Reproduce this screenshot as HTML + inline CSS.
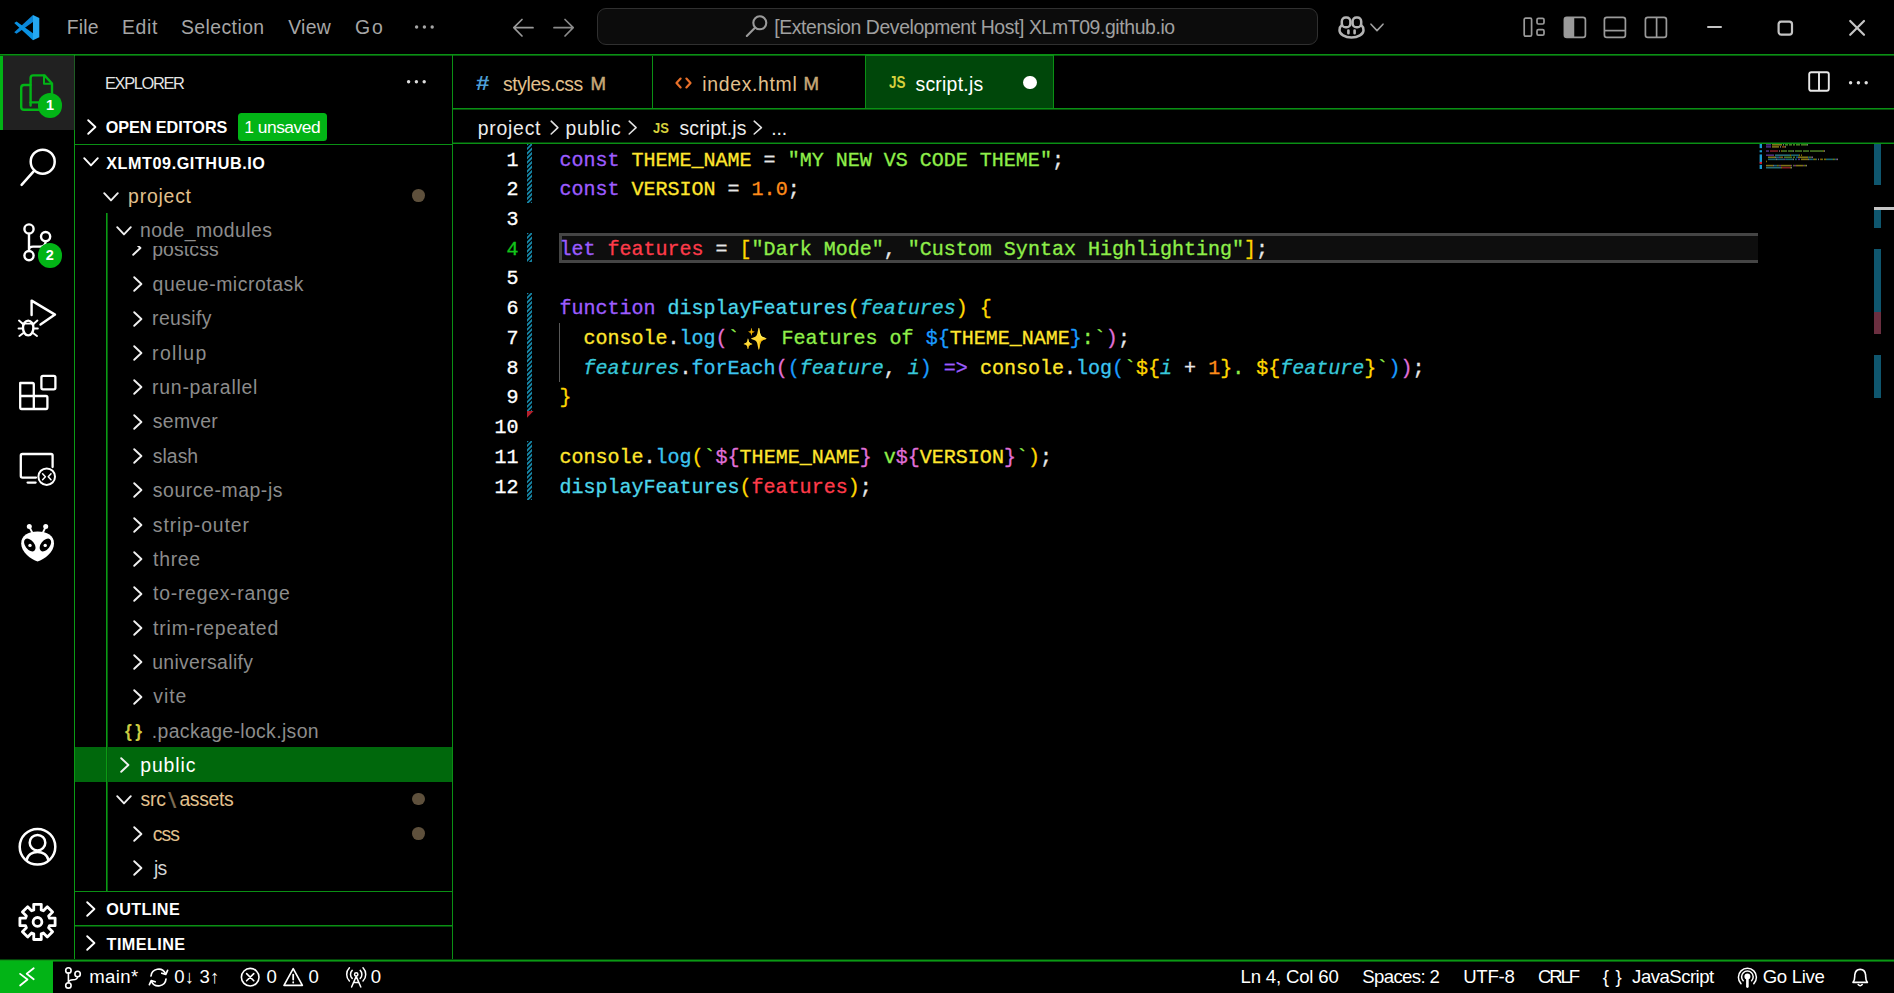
<!DOCTYPE html>
<html lang="en">
<head>
<meta charset="utf-8">
<title>script.js - XLmT09.github.io - Visual Studio Code</title>
<style>
*{box-sizing:border-box;margin:0;padding:0}
html,body{width:1894px;height:993px;background:#000;overflow:hidden}
body{position:relative;font-family:"Liberation Sans",sans-serif;color:#fff;font-size:19px}
.abs{position:absolute}
.hl{position:absolute;height:1px;background:#0a9014}
.vl{position:absolute;width:1px;background:#0a9014}
.t{position:absolute;white-space:pre;line-height:1}
svg{position:absolute;overflow:visible}
/* title bar */
.menu{color:#b4b4b4;font-size:19.5px;top:17px}
/* sidebar */
.row{position:absolute;left:75px;width:377px;height:34px}
.lbl{position:absolute;white-space:pre;line-height:1;font-size:19.6px}
.ign{color:#8c8c8c}
.mod{color:#e2c08d}
.hdr{position:absolute;white-space:pre;line-height:1;font-weight:bold;font-size:16.6px;color:#fff}
.dot{position:absolute;width:12px;height:12px;border-radius:50%;background:#5e503c;left:413px}
/* editor */
.ln{position:absolute;left:453px;width:65.5px;text-align:right;font-family:"Liberation Mono",monospace;font-size:20.03px;line-height:1;color:#fff;white-space:pre;-webkit-text-stroke:0.3px currentColor}
.cl{position:absolute;left:559.4px;font-family:"Liberation Mono",monospace;font-size:20.03px;line-height:1;white-space:pre;color:#e8e8e8;-webkit-text-stroke:0.3px currentColor}
.k{color:#9d5cff}.c{color:#ffe62e}.s{color:#8fee4a}.n{color:#ff8c1a}.v{color:#ff3b4a}
.f{color:#4dd6ea}.p{color:#38c8da;font-style:italic}.m{color:#3cc4f0}.w{color:#e8e8e8}
.b1{color:#ffd700}.b2{color:#e070d8}.b3{color:#1a9cff}
.sp{display:inline-block;width:29.9px;height:0;line-height:0;text-align:center;color:#ffb12e;font-family:"DejaVu Sans",sans-serif;font-size:21px;-webkit-text-stroke:0;vertical-align:baseline;position:relative;top:1.5px}
#minimap i{position:absolute;height:2px;opacity:.55}
#minimap b{position:absolute;width:2px;background:#1a9ad0}
.hatch{position:absolute;left:526.7px;width:5.6px;background:repeating-linear-gradient(153deg,#1a87a6 0 2.3px,#000 2.3px 4.1px)}
/* status */
.st{position:absolute;white-space:pre;line-height:1;font-size:19px;top:968px;color:#fff}
</style>
</head>
<body>

<!-- ===== TITLE BAR ===== -->
<div id="titlebar">
<svg style="left:13.8px;top:14.7px" width="25.3" height="25.3" viewBox="0 0 100 100"><polygon fill="#0a86d8" points="1,68 10,74 75,28 75,0"/><polygon fill="#0a92e2" points="1,32 10,26 75,72 75,100"/><polygon fill="#25a8f2" points="75,0 100,12 100,88 75,100"/></svg>
<div class="t" style="left:66.81px;top:17.78px;font-size:19.4px;letter-spacing:0.131px;color:#a6a6a6;">File</div>
<div class="t" style="left:122.01px;top:17.78px;font-size:19.4px;letter-spacing:0.635px;color:#a6a6a6;">Edit</div>
<div class="t" style="left:181.02px;top:17.78px;font-size:19.4px;letter-spacing:0.417px;color:#a6a6a6;">Selection</div>
<div class="t" style="left:288.21px;top:17.78px;font-size:19.4px;letter-spacing:0.296px;color:#a6a6a6;">View</div>
<div class="t" style="left:354.92px;top:17.78px;font-size:19.4px;letter-spacing:1.911px;color:#a6a6a6;">Go</div>
<svg style="left:414px;top:24px" width="21" height="6"><circle cx="2.6" cy="3" r="1.7" fill="#a6a6a6"/><circle cx="10.4" cy="3" r="1.7" fill="#a6a6a6"/><circle cx="18.2" cy="3" r="1.7" fill="#a6a6a6"/></svg>
<svg style="left:512px;top:17px" width="24" height="22" fill="none" stroke="#9a9a9a" stroke-width="1.7" stroke-linecap="round" stroke-linejoin="round"><path d="M21 10.7H2M10 2.5 L1.8 10.7 L10 19"/></svg>
<svg style="left:552px;top:17px" width="24" height="22" fill="none" stroke="#8a8a8a" stroke-width="1.7" stroke-linecap="round" stroke-linejoin="round"><path d="M2 10.7H21M13 2.5 L21.2 10.7 L13 19"/></svg>
<div class="abs" style="left:597px;top:8px;width:721px;height:37px;border:1px solid #303030;border-radius:9px;background:#0c0c0c"></div>
<svg style="left:745px;top:14px" width="24" height="24" fill="none" stroke="#9a9a9a" stroke-width="2.1" stroke-linecap="round"><circle cx="14.8" cy="8.8" r="6.5"/><path d="M10 13.7 L1.8 22"/></svg>
<div class="t" style="left:774.22px;top:17.58px;font-size:19.4px;letter-spacing:-0.393px;color:#a0a0a0;">[Extension Development Host] XLmT09.github.io</div>
<svg style="left:1338px;top:16px" width="27" height="23" viewBox="0 0 27 23" fill="none" stroke="#b4b4b4" stroke-width="2.5" stroke-linejoin="round" stroke-linecap="round">
<path d="M3.4 9.6 C1.8 10.8 1.5 12.2 1.5 14.2 C1.5 18.4 7 21.4 13.5 21.4 C20 21.4 25.5 18.4 25.5 14.2 C25.5 12.2 25.2 10.8 23.6 9.6"/>
<rect x="3.8" y="1.6" width="8.6" height="9.6" rx="3.8"/><rect x="14.6" y="1.6" width="8.6" height="9.6" rx="3.8"/>
<path d="M10.4 14.6 V17.2 M16.6 14.6 V17.2" stroke-width="2.6"/>
</svg>
<svg style="left:1369.5px;top:23px" width="14" height="10" fill="none" stroke="#a0a0a0" stroke-width="1.6" stroke-linecap="round" stroke-linejoin="round"><path d="M1 1.2 L7 7.6 L13 1.2"/></svg>
<svg style="left:1523px;top:17px" width="23" height="21" fill="none" stroke="#9a9a9a" stroke-width="1.7"><rect x="1.2" y="1.2" width="7.4" height="18" rx="1.4"/><rect x="14" y="1.4" width="7" height="5.6" rx="1.4"/><rect x="14" y="12.6" width="7" height="5.6" rx="1.4"/></svg>
<svg style="left:1562.5px;top:16px" width="24" height="23" fill="none" stroke="#9a9a9a" stroke-width="1.7"><rect x="1.4" y="1.4" width="21" height="20" rx="2.4"/><path d="M3.8 1.4 H10.4 V21.4 H3.8 Q1.4 21.4 1.4 19 V3.8 Q1.4 1.4 3.8 1.4Z" fill="#9a9a9a" stroke="none"/><path d="M10.4 1.4V21.4"/></svg>
<svg style="left:1603px;top:16px" width="24" height="23" fill="none" stroke="#9a9a9a" stroke-width="1.7"><rect x="1.4" y="1.4" width="21" height="20" rx="2.4"/><path d="M1.4 14.6H22.4"/></svg>
<svg style="left:1643.5px;top:16px" width="24" height="23" fill="none" stroke="#9a9a9a" stroke-width="1.7"><rect x="1.4" y="1.4" width="21" height="20" rx="2.4"/><path d="M12.6 1.4V21.4"/></svg>
<div class="abs" style="left:1706.6px;top:25.8px;width:15.6px;height:2.3px;background:#c4c4c4;border-radius:1px"></div>
<svg style="left:1777px;top:19.6px" width="17" height="17" fill="none" stroke="#c4c4c4" stroke-width="2.2"><rect x="1.6" y="1.7" width="13.4" height="12.9" rx="2.6"/></svg>
<svg style="left:1848px;top:19px" width="19" height="18" fill="none" stroke="#c4c4c4" stroke-width="2.2" stroke-linecap="round"><path d="M2.2 2 L16 15.8 M16 2 L2.2 15.8"/></svg>
</div>
<!-- ===== ACTIVITY BAR ===== -->
<div id="activity">
<div class="abs" style="left:0;top:55px;width:74px;height:75px;background:#212121"></div>
<div class="abs" style="left:0;top:55px;width:3px;height:75px;background:#02b416"></div>
<svg style="left:0;top:55px" width="75" height="75" fill="none" stroke="#02b416" stroke-width="2.4" stroke-linejoin="round" stroke-linecap="round">
<path d="M30.6 50.5 V23 Q30.6 20.4 33.2 20.4 H44.5 L52 28.5 V44"/>
<path d="M44 20.6 V28.8 H51.8" stroke-width="2"/>
<path d="M30.4 30 H24 Q21.2 30 21.2 32.8 V52 Q21.2 54.8 24 54.8 H40"/>
<path d="M30.6 47.4 H40"/>
</svg>
<div class="abs" style="left:37.6px;top:92.9px;width:24.8px;height:24.8px;border-radius:50%;background:#02b416"></div><div class="t" style="left:37.6px;top:98.0px;width:24.8px;text-align:center;font-size:14.5px;font-weight:bold;color:#fff">1</div>
<svg style="left:0;top:130px" width="75" height="75" fill="none" stroke="#fff" stroke-width="2.5" stroke-linecap="round"><circle cx="42.7" cy="31.7" r="12"/><path d="M34.3 40.6 L21.6 54.9"/></svg>
<svg style="left:0;top:205px" width="75" height="75" fill="none" stroke="#fff" stroke-width="2.4" stroke-linecap="round"><circle cx="29" cy="24" r="4.6"/><circle cx="29" cy="50.6" r="4.6"/><circle cx="45.6" cy="31.6" r="4.6"/><path d="M29 28.8 V45.8 M45.6 36.4 Q45.6 41.6 40 41.6 H33 Q29 41.6 29 45"/></svg>
<div class="abs" style="left:37.5px;top:242.9px;width:24.8px;height:24.8px;border-radius:50%;background:#02b416"></div><div class="t" style="left:37.5px;top:248.0px;width:24.8px;text-align:center;font-size:14.5px;font-weight:bold;color:#fff">2</div>
<svg style="left:0;top:280px" width="75" height="75" fill="none" stroke="#fff" stroke-width="2.4" stroke-linejoin="round" stroke-linecap="round">
<path d="M31.6 35 V20.6 L55 34.6 L40.5 44.6"/>
<ellipse cx="28.2" cy="48" rx="5.2" ry="7.4"/>
<path d="M22.4 43.6 H34 " stroke-width="1.8"/>
<path d="M23 44 L19 40.6 M33.4 44 L37.4 40.6 M22.8 48.6 H18.6 M33.6 48.6 H37.8 M23.4 53 L19.4 56 M33 53 L37 56" stroke-width="2"/>
</svg>
<svg style="left:0;top:355px" width="75" height="75" fill="none" stroke="#fff" stroke-width="2.3" stroke-linejoin="round">
<path d="M20.2 28 H32.4 Q33.8 28 33.8 29.4 V41 H46 Q47.4 41 47.4 42.4 V52.6 Q47.4 54 46 54 H21.6 Q20.2 54 20.2 52.6 Z"/>
<path d="M20.2 41 H33.8 V54"/>
<rect x="41.4" y="20.8" width="14" height="13.6" rx="1.6"/>
</svg>
<svg style="left:0;top:430px" width="75" height="75" fill="none" stroke="#fff" stroke-width="2.3" stroke-linejoin="round" stroke-linecap="round">
<path d="M36 47.6 H22.4 Q20.8 47.6 20.8 46 V25.6 Q20.8 24 22.4 24 H51 Q52.6 24 52.6 25.6 V37"/>
<path d="M27.6 52.6 H35.6"/>
<circle cx="46.7" cy="46.7" r="8.3" stroke-width="2"/>
<path d="M42.6 43.8 L45.4 46.8 L42.6 49.8 M51 43.8 L48.2 46.8 L51 49.8" stroke-width="1.5"/>
</svg>
<svg style="left:0;top:505px" width="75" height="75">
<path fill="#fff" d="M37.6 56.4 C31 54 21.2 47.6 21.2 38.4 C21.2 30.6 28 26.6 37.6 26.6 C47.2 26.6 54 30.6 54 38.4 C54 47.6 44.2 54 37.6 56.4 Z"/>
<path stroke="#fff" stroke-width="1.8" fill="none" d="M29.4 22 L33 29 M45.6 22 L42.2 29"/>
<circle cx="29.3" cy="21.6" r="2.5" fill="#fff"/><circle cx="45.7" cy="21.6" r="2.5" fill="#fff"/>
<ellipse cx="29.8" cy="40" rx="7.4" ry="4.5" transform="rotate(52 29.8 40)" fill="#000"/>
<ellipse cx="45.4" cy="40" rx="7.4" ry="4.5" transform="rotate(-52 45.4 40)" fill="#000"/>
<circle cx="30" cy="40.4" r="1.7" fill="#fff"/><circle cx="45.2" cy="40.4" r="1.7" fill="#fff"/>
</svg>
<svg style="left:0;top:809px" width="75" height="75" fill="none" stroke="#fff" stroke-width="2.5">
<circle cx="37.5" cy="37.7" r="17.8"/><circle cx="37.5" cy="33.7" r="7.8"/>
<path d="M26.4 51.6 C28.4 40 46.6 40 48.6 51.6"/>
</svg>
<svg style="left:0;top:884px" width="75" height="75" fill="none" stroke="#fff" stroke-width="2.8" stroke-linejoin="round"><path d="M33.8 25.9 L33.7 20.3 L41.3 20.3 L41.2 25.9 L43.4 26.8 L47.3 22.8 L52.6 28.1 L48.6 32.0 L49.5 34.2 L55.1 34.1 L55.1 41.7 L49.5 41.6 L48.6 43.8 L52.6 47.7 L47.3 53.0 L43.4 49.0 L41.2 49.9 L41.3 55.5 L33.7 55.5 L33.8 49.9 L31.6 49.0 L27.7 53.0 L22.4 47.7 L26.4 43.8 L25.5 41.6 L19.9 41.7 L19.9 34.1 L25.5 34.2 L26.4 32.0 L22.4 28.1 L27.7 22.8 L31.6 26.8 Z"/><circle cx="37.5" cy="37.9" r="4.4"/></svg>
</div>
<!-- ===== SIDEBAR ===== -->
<div id="sidebar">
<div class="t" style="left:104.95px;top:75.42px;font-size:16.4px;letter-spacing:-1.330px;color:#e4e4e4;">EXPLORER</div>
<svg style="left:405.5px;top:79px" width="21" height="6"><circle cx="2.6" cy="2.8" r="1.7" fill="#ddd"/><circle cx="10.4" cy="2.8" r="1.7" fill="#ddd"/><circle cx="18.2" cy="2.8" r="1.7" fill="#ddd"/></svg>
<svg style="left:86.5px;top:119.3px" width="10" height="16" fill="none" stroke="#fff" stroke-width="1.9" stroke-linecap="round" stroke-linejoin="round"><path d="M1.2 1.2 L8.4 8 L1.2 14.8"/></svg>
<div class="t" style="left:105.64px;top:119.29px;font-size:16.2px;letter-spacing:-0.029px;color:#fff;font-weight:bold;">OPEN EDITORS</div>
<div class="abs" style="left:237.7px;top:112.8px;width:89.2px;height:28.4px;border-radius:3.5px;background:#02b416"></div>
<div class="t" style="left:244.27px;top:119.27px;font-size:17.4px;letter-spacing:-0.494px;color:#fff;">1 unsaved</div>
<div class="hl" style="left:75px;top:144px;width:377px"></div>
<svg style="left:83.2px;top:157.4px" width="16" height="10" fill="none" stroke="#fff" stroke-width="1.9" stroke-linecap="round" stroke-linejoin="round"><path d="M1.2 1.2 L8 8.4 L14.8 1.2"/></svg>
<div class="t" style="left:106.16px;top:154.69px;font-size:16.2px;letter-spacing:0.568px;color:#fff;font-weight:bold;">XLMT09.GITHUB.IO</div>
<div class="abs" style="left:75px;top:747.2px;width:377px;height:34.4px;background:#00680c"></div>
<div class="abs" style="left:106px;top:213px;height:678px;width:1px;background:#0a9a14"></div>
<div class="abs" style="left:107px;top:213px;height:678px;width:1px;background:#065c0c"></div>
<div class="abs" style="left:75px;top:246.4px;width:377px;height:20px;overflow:hidden">
<svg style="left:57.3px;top:-6.0px" width="10" height="16" fill="none" stroke="#f0f0f0" stroke-width="1.9" stroke-linecap="round" stroke-linejoin="round"><path d="M1.2 1.2 L8.4 8 L1.2 14.8"/></svg>
<div class="t" style="left:77.15px;top:-6.62px;font-size:19.4px;letter-spacing:0.130px;color:#8c8c8c;">postcss</div>
</div>
<svg style="left:103.3px;top:191.8px" width="16" height="10" fill="none" stroke="#f0f0f0" stroke-width="1.9" stroke-linecap="round" stroke-linejoin="round"><path d="M1.2 1.2 L8 8.4 L14.8 1.2"/></svg>
<div class="t" style="left:128.05px;top:187.08px;font-size:19.4px;letter-spacing:0.794px;color:#e2c08d;">project</div>
<svg style="left:115.8px;top:226.0px" width="16" height="10" fill="none" stroke="#f0f0f0" stroke-width="1.9" stroke-linecap="round" stroke-linejoin="round"><path d="M1.2 1.2 L8 8.4 L14.8 1.2"/></svg>
<div class="t" style="left:140.01px;top:221.28px;font-size:19.4px;letter-spacing:0.420px;color:#8c8c8c;">node_modules</div>
<svg style="left:132.5px;top:276.3px" width="10" height="16" fill="none" stroke="#f0f0f0" stroke-width="1.9" stroke-linecap="round" stroke-linejoin="round"><path d="M1.2 1.2 L8.4 8 L1.2 14.8"/></svg>
<div class="t" style="left:152.59px;top:275.08px;font-size:19.4px;letter-spacing:0.534px;color:#8c8c8c;">queue-microtask</div>
<svg style="left:132.5px;top:310.7px" width="10" height="16" fill="none" stroke="#f0f0f0" stroke-width="1.9" stroke-linecap="round" stroke-linejoin="round"><path d="M1.2 1.2 L8.4 8 L1.2 14.8"/></svg>
<div class="t" style="left:152.11px;top:309.48px;font-size:19.4px;letter-spacing:0.365px;color:#8c8c8c;">reusify</div>
<svg style="left:132.5px;top:345.0px" width="10" height="16" fill="none" stroke="#f0f0f0" stroke-width="1.9" stroke-linecap="round" stroke-linejoin="round"><path d="M1.2 1.2 L8.4 8 L1.2 14.8"/></svg>
<div class="t" style="left:152.11px;top:343.78px;font-size:19.4px;letter-spacing:1.331px;color:#8c8c8c;">rollup</div>
<svg style="left:132.5px;top:379.3px" width="10" height="16" fill="none" stroke="#f0f0f0" stroke-width="1.9" stroke-linecap="round" stroke-linejoin="round"><path d="M1.2 1.2 L8.4 8 L1.2 14.8"/></svg>
<div class="t" style="left:152.11px;top:378.08px;font-size:19.4px;letter-spacing:0.749px;color:#8c8c8c;">run-parallel</div>
<svg style="left:132.5px;top:413.7px" width="10" height="16" fill="none" stroke="#f0f0f0" stroke-width="1.9" stroke-linecap="round" stroke-linejoin="round"><path d="M1.2 1.2 L8.4 8 L1.2 14.8"/></svg>
<div class="t" style="left:152.86px;top:412.48px;font-size:19.4px;letter-spacing:0.273px;color:#8c8c8c;">semver</div>
<svg style="left:132.5px;top:448.1px" width="10" height="16" fill="none" stroke="#f0f0f0" stroke-width="1.9" stroke-linecap="round" stroke-linejoin="round"><path d="M1.2 1.2 L8.4 8 L1.2 14.8"/></svg>
<div class="t" style="left:152.86px;top:446.88px;font-size:19.4px;color:#8c8c8c;">slash</div>
<svg style="left:132.5px;top:482.4px" width="10" height="16" fill="none" stroke="#f0f0f0" stroke-width="1.9" stroke-linecap="round" stroke-linejoin="round"><path d="M1.2 1.2 L8.4 8 L1.2 14.8"/></svg>
<div class="t" style="left:152.86px;top:481.18px;font-size:19.4px;letter-spacing:0.562px;color:#8c8c8c;">source-map-js</div>
<svg style="left:132.5px;top:516.8px" width="10" height="16" fill="none" stroke="#f0f0f0" stroke-width="1.9" stroke-linecap="round" stroke-linejoin="round"><path d="M1.2 1.2 L8.4 8 L1.2 14.8"/></svg>
<div class="t" style="left:152.86px;top:515.58px;font-size:19.4px;letter-spacing:0.873px;color:#8c8c8c;">strip-outer</div>
<svg style="left:132.5px;top:551.1px" width="10" height="16" fill="none" stroke="#f0f0f0" stroke-width="1.9" stroke-linecap="round" stroke-linejoin="round"><path d="M1.2 1.2 L8.4 8 L1.2 14.8"/></svg>
<div class="t" style="left:153.11px;top:549.88px;font-size:19.4px;letter-spacing:0.709px;color:#8c8c8c;">three</div>
<svg style="left:132.5px;top:585.5px" width="10" height="16" fill="none" stroke="#f0f0f0" stroke-width="1.9" stroke-linecap="round" stroke-linejoin="round"><path d="M1.2 1.2 L8.4 8 L1.2 14.8"/></svg>
<div class="t" style="left:153.11px;top:584.28px;font-size:19.4px;letter-spacing:0.731px;color:#8c8c8c;">to-regex-range</div>
<svg style="left:132.5px;top:619.8px" width="10" height="16" fill="none" stroke="#f0f0f0" stroke-width="1.9" stroke-linecap="round" stroke-linejoin="round"><path d="M1.2 1.2 L8.4 8 L1.2 14.8"/></svg>
<div class="t" style="left:153.11px;top:618.58px;font-size:19.4px;letter-spacing:0.815px;color:#8c8c8c;">trim-repeated</div>
<svg style="left:132.5px;top:654.2px" width="10" height="16" fill="none" stroke="#f0f0f0" stroke-width="1.9" stroke-linecap="round" stroke-linejoin="round"><path d="M1.2 1.2 L8.4 8 L1.2 14.8"/></svg>
<div class="t" style="left:152.14px;top:652.98px;font-size:19.4px;letter-spacing:0.351px;color:#8c8c8c;">universalify</div>
<svg style="left:132.5px;top:688.5px" width="10" height="16" fill="none" stroke="#f0f0f0" stroke-width="1.9" stroke-linecap="round" stroke-linejoin="round"><path d="M1.2 1.2 L8.4 8 L1.2 14.8"/></svg>
<div class="t" style="left:153.33px;top:687.28px;font-size:19.4px;letter-spacing:0.913px;color:#8c8c8c;">vite</div>
<div class="t" style="left:125.12px;top:722.69px;font-size:17.5px;letter-spacing:3.426px;color:#cbcb41;font-weight:bold;">{}</div>
<div class="t" style="left:151.83px;top:721.68px;font-size:19.4px;letter-spacing:0.362px;color:#8c8c8c;">.package-lock.json</div>
<svg style="left:120.2px;top:757.3px" width="10" height="16" fill="none" stroke="#f0f0f0" stroke-width="1.9" stroke-linecap="round" stroke-linejoin="round"><path d="M1.2 1.2 L8.4 8 L1.2 14.8"/></svg>
<div class="t" style="left:140.25px;top:756.08px;font-size:19.4px;letter-spacing:0.895px;color:#fff;">public</div>
<svg style="left:115.6px;top:795.1px" width="16" height="10" fill="none" stroke="#f0f0f0" stroke-width="1.9" stroke-linecap="round" stroke-linejoin="round"><path d="M1.2 1.2 L8 8.4 L14.8 1.2"/></svg>
<div class="t" style="left:140.56px;top:790.38px;font-size:19.4px;letter-spacing:-0.204px;color:#e2c08d;">src</div>
<div class="t" style="left:168.40px;top:791.98px;font-size:19.4px;color:#7d6c52;transform:scale(1.55,1.12);transform-origin:0 85%;">\</div>
<div class="t" style="left:179.38px;top:790.38px;font-size:19.4px;letter-spacing:-0.349px;color:#e2c08d;">assets</div>
<svg style="left:132.5px;top:825.9px" width="10" height="16" fill="none" stroke="#f0f0f0" stroke-width="1.9" stroke-linecap="round" stroke-linejoin="round"><path d="M1.2 1.2 L8.4 8 L1.2 14.8"/></svg>
<div class="t" style="left:152.78px;top:824.68px;font-size:19.4px;letter-spacing:-0.987px;color:#e2c08d;">css</div>
<svg style="left:132.5px;top:860.3px" width="10" height="16" fill="none" stroke="#f0f0f0" stroke-width="1.9" stroke-linecap="round" stroke-linejoin="round"><path d="M1.2 1.2 L8.4 8 L1.2 14.8"/></svg>
<div class="t" style="left:154.07px;top:859.08px;font-size:19.4px;letter-spacing:-0.983px;color:#d4d4d4;">js</div>
<div class="dot" style="left:412.0px;top:189.2px;width:12.8px;height:12.8px"></div>
<div class="dot" style="left:412.0px;top:792.6px;width:12.8px;height:12.8px"></div>
<div class="dot" style="left:412.0px;top:827.0px;width:12.8px;height:12.8px"></div>
<div class="hl" style="left:75px;top:891px;width:377px"></div>
<div class="hl" style="left:75px;top:925px;width:377px"></div>
<div class="hl" style="left:75px;top:926px;width:377px;background:#054a0a"></div>
<svg style="left:86.3px;top:900.8px" width="10" height="16" fill="none" stroke="#fff" stroke-width="1.9" stroke-linecap="round" stroke-linejoin="round"><path d="M1.2 1.2 L8.4 8 L1.2 14.8"/></svg>
<div class="t" style="left:106.14px;top:901.29px;font-size:16.2px;letter-spacing:0.433px;color:#fff;font-weight:bold;">OUTLINE</div>
<svg style="left:86.3px;top:935.2px" width="10" height="16" fill="none" stroke="#fff" stroke-width="1.9" stroke-linecap="round" stroke-linejoin="round"><path d="M1.2 1.2 L8.4 8 L1.2 14.8"/></svg>
<div class="t" style="left:106.62px;top:935.69px;font-size:16.2px;letter-spacing:0.431px;color:#fff;font-weight:bold;">TIMELINE</div>
</div>
<!-- ===== TABS + BREADCRUMBS ===== -->
<div id="tabs">
<div class="abs" style="left:866px;top:55px;width:187px;height:53px;background:#00470a"></div>
<div class="vl" style="left:652px;top:55px;height:53px"></div>
<div class="vl" style="left:865px;top:55px;height:53px"></div>
<div class="vl" style="left:1053px;top:55px;height:53px"></div>
<div class="t" style="left:475.95px;top:72.85px;font-size:20.5px;color:#4d9fd6;font-weight:bold;transform:scaleX(1.18);transform-origin:0 0;">#</div>
<div class="t" style="left:502.96px;top:74.78px;font-size:19.4px;letter-spacing:-0.415px;color:#e2c08d;">styles.css</div>
<div class="t" style="left:590.47px;top:75.46px;font-size:18.6px;color:#c8a876;-webkit-text-stroke:0.5px #c8a876;">M</div>
<svg style="left:675px;top:76.5px" width="17" height="12" fill="none" stroke="#e8702a" stroke-width="2.2" stroke-linecap="round" stroke-linejoin="round"><path d="M5.6 1.6 L1.5 6 L5.6 10.4 M11.4 1.6 L15.5 6 L11.4 10.4"/></svg>
<div class="t" style="left:702.30px;top:74.78px;font-size:19.4px;letter-spacing:0.675px;color:#e2c08d;">index.html</div>
<div class="t" style="left:803.47px;top:75.46px;font-size:18.6px;color:#c8a876;-webkit-text-stroke:0.5px #c8a876;">M</div>
<div class="t" style="left:889.00px;top:75.19px;font-size:15.6px;transform:scaleX(0.866);transform-origin:0 0;color:#d6d03c;font-weight:bold;">JS</div>
<div class="t" style="left:915.46px;top:74.78px;font-size:19.4px;letter-spacing:0.249px;color:#fff;">script.js</div>
<div class="abs" style="left:1023.4px;top:75.9px;width:13.2px;height:13.2px;border-radius:50%;background:#fff"></div>
<svg style="left:1808px;top:71px" width="22" height="21" fill="none" stroke="#e8e8e8" stroke-width="1.9" stroke-linejoin="round"><rect x="1.2" y="1.2" width="19.6" height="18.6" rx="2"/><path d="M11 1.2 V19.8"/></svg>
<svg style="left:1848px;top:79.6px" width="21" height="6"><circle cx="2.6" cy="2.8" r="1.7" fill="#e0e0e0"/><circle cx="10.4" cy="2.8" r="1.7" fill="#e0e0e0"/><circle cx="18.2" cy="2.8" r="1.7" fill="#e0e0e0"/></svg>
<div class="t" style="left:477.65px;top:118.78px;font-size:19.4px;letter-spacing:0.777px;color:#ececec;">project</div>
<svg style="left:549.8px;top:120.4px" width="9.5" height="16" fill="none" stroke="#e0e0e0" stroke-width="1.6" stroke-linecap="round" stroke-linejoin="round"><path d="M1.2 1.2 L7.9 7.6 L1.2 14"/></svg>
<div class="t" style="left:565.45px;top:118.78px;font-size:19.4px;letter-spacing:0.895px;color:#ececec;">public</div>
<svg style="left:628.3px;top:120.4px" width="9.7" height="16" fill="none" stroke="#e0e0e0" stroke-width="1.6" stroke-linecap="round" stroke-linejoin="round"><path d="M1.2 1.2 L8.1 7.6 L1.2 14"/></svg>
<div class="t" style="left:652.70px;top:119.76px;font-size:15.4px;transform:scaleX(0.844);transform-origin:0 0;color:#d6d03c;font-weight:bold;">JS</div>
<div class="t" style="left:679.46px;top:118.78px;font-size:19.4px;letter-spacing:0.161px;color:#ececec;">script.js</div>
<svg style="left:753.3px;top:120.4px" width="10.0" height="16" fill="none" stroke="#e0e0e0" stroke-width="1.6" stroke-linecap="round" stroke-linejoin="round"><path d="M1.2 1.2 L8.4 7.6 L1.2 14"/></svg>
<div class="t" style="left:771.13px;top:118.78px;font-size:19.4px;letter-spacing:-0.064px;color:#ececec;">...</div>
</div>
<!-- ===== EDITOR ===== -->
<div id="editor">
<div class="abs" style="left:559px;top:233.4px;width:1198.5px;height:29.4px;background:#0e0e0e;border:3px solid #454545;border-right:0"></div>
<svg style="left:526.8px;top:143.9px;overflow:hidden" width="5.5" height="59.1"><path d="M-1 1.50 L6.5 -6.00 M-1 6.03 L6.5 -1.47 M-1 10.56 L6.5 3.06 M-1 15.09 L6.5 7.59 M-1 19.62 L6.5 12.12 M-1 24.15 L6.5 16.65 M-1 28.68 L6.5 21.18 M-1 33.21 L6.5 25.71 M-1 37.74 L6.5 30.24 M-1 42.27 L6.5 34.77 M-1 46.80 L6.5 39.30 M-1 51.33 L6.5 43.83 M-1 55.86 L6.5 48.36 M-1 60.39 L6.5 52.89 M-1 64.92 L6.5 57.42 " stroke="#1787a8" stroke-width="1.9" fill="none"/></svg>
<svg style="left:526.8px;top:233.1px;overflow:hidden" width="5.5" height="29.4"><path d="M-1 1.50 L6.5 -6.00 M-1 6.03 L6.5 -1.47 M-1 10.56 L6.5 3.06 M-1 15.09 L6.5 7.59 M-1 19.62 L6.5 12.12 M-1 24.15 L6.5 16.65 M-1 28.68 L6.5 21.18 M-1 33.21 L6.5 25.71 M-1 37.74 L6.5 30.24 " stroke="#1787a8" stroke-width="1.9" fill="none"/></svg>
<svg style="left:526.8px;top:292.5px;overflow:hidden" width="5.5" height="118.6"><path d="M-1 1.50 L6.5 -6.00 M-1 6.03 L6.5 -1.47 M-1 10.56 L6.5 3.06 M-1 15.09 L6.5 7.59 M-1 19.62 L6.5 12.12 M-1 24.15 L6.5 16.65 M-1 28.68 L6.5 21.18 M-1 33.21 L6.5 25.71 M-1 37.74 L6.5 30.24 M-1 42.27 L6.5 34.77 M-1 46.80 L6.5 39.30 M-1 51.33 L6.5 43.83 M-1 55.86 L6.5 48.36 M-1 60.39 L6.5 52.89 M-1 64.92 L6.5 57.42 M-1 69.45 L6.5 61.95 M-1 73.98 L6.5 66.48 M-1 78.51 L6.5 71.01 M-1 83.04 L6.5 75.54 M-1 87.57 L6.5 80.07 M-1 92.10 L6.5 84.60 M-1 96.63 L6.5 89.13 M-1 101.16 L6.5 93.66 M-1 105.69 L6.5 98.19 M-1 110.22 L6.5 102.72 M-1 114.75 L6.5 107.25 M-1 119.28 L6.5 111.78 M-1 123.81 L6.5 116.31 " stroke="#1787a8" stroke-width="1.9" fill="none"/></svg>
<svg style="left:526.8px;top:441.1px;overflow:hidden" width="5.5" height="59.1"><path d="M-1 1.50 L6.5 -6.00 M-1 6.03 L6.5 -1.47 M-1 10.56 L6.5 3.06 M-1 15.09 L6.5 7.59 M-1 19.62 L6.5 12.12 M-1 24.15 L6.5 16.65 M-1 28.68 L6.5 21.18 M-1 33.21 L6.5 25.71 M-1 37.74 L6.5 30.24 M-1 42.27 L6.5 34.77 M-1 46.80 L6.5 39.30 M-1 51.33 L6.5 43.83 M-1 55.86 L6.5 48.36 M-1 60.39 L6.5 52.89 M-1 64.92 L6.5 57.42 " stroke="#1787a8" stroke-width="1.9" fill="none"/></svg>
<svg style="left:526.5px;top:411.2px" width="7" height="7"><polygon points="0,0 6.6,0 0,6.8" fill="#b3202c"/></svg>
<div class="abs" style="left:559px;top:322.5px;width:1px;height:59.4px;background:#585858"></div>
<div class="ln" style="top:151.00px">1</div>
<div class="cl" style="top:151.00px"><span class="k">const</span> <span class="c">THEME_NAME</span> = <span class="s">&quot;MY NEW VS CODE THEME&quot;</span>;</div>
<div class="ln" style="top:180.00px">2</div>
<div class="cl" style="top:180.00px"><span class="k">const</span> <span class="c">VERSION</span> = <span class="n">1.0</span>;</div>
<div class="ln" style="top:210.00px">3</div>
<div class="ln" style="top:240.00px;color:#12c41a">4</div>
<div class="cl" style="top:240.00px"><span class="k">let</span> <span class="v">features</span> = <span class="b1">[</span><span class="s">&quot;Dark Mode&quot;</span>, <span class="s">&quot;Custom Syntax Highlighting&quot;</span><span class="b1">]</span>;</div>
<div class="ln" style="top:269.00px">5</div>
<div class="ln" style="top:299.00px">6</div>
<div class="cl" style="top:299.00px"><span class="k">function</span> <span class="f">displayFeatures</span><span class="b1">(</span><span class="p">features</span><span class="b1">)</span> <span class="b1">{</span></div>
<div class="ln" style="top:329.00px">7</div>
<div class="cl" style="top:329.00px">  <span class="c">console</span>.<span class="m">log</span><span class="b2">(</span><span class="s">`</span><span class="sp">✨</span><span class="s"> Features of </span><span class="b3">${</span><span class="c">THEME_NAME</span><span class="b3">}</span><span class="s">:`</span><span class="b2">)</span>;</div>
<div class="ln" style="top:359.00px">8</div>
<div class="cl" style="top:359.00px">  <span class="p">features</span>.<span class="m">forEach</span><span class="b2">(</span><span class="b3">(</span><span class="p">feature</span>, <span class="p">i</span><span class="b3">)</span> <span class="k">=&gt;</span> <span class="c">console</span>.<span class="m">log</span><span class="b3">(</span><span class="s">`</span><span class="b1">${</span><span class="p">i</span> + <span class="n">1</span><span class="b1">}</span><span class="s">. </span><span class="b1">${</span><span class="p">feature</span><span class="b1">}</span><span class="s">`</span><span class="b3">)</span><span class="b2">)</span>;</div>
<div class="ln" style="top:388.00px">9</div>
<div class="cl" style="top:388.00px"><span class="b1">}</span></div>
<div class="ln" style="top:418.00px">10</div>
<div class="ln" style="top:448.00px">11</div>
<div class="cl" style="top:448.00px"><span class="c">console</span>.<span class="m">log</span><span class="b1">(</span><span class="s">`</span><span class="b2">${</span><span class="c">THEME_NAME</span><span class="b2">}</span><span class="s"> v</span><span class="b2">${</span><span class="c">VERSION</span><span class="b2">}</span><span class="s">`</span><span class="b1">)</span>;</div>
<div class="ln" style="top:478.00px">12</div>
<div class="cl" style="top:478.00px"><span class="f">displayFeatures</span><span class="b1">(</span><span class="v">features</span><span class="b1">)</span>;</div>
<svg id="minimap" style="left:1750px;top:140px" width="120" height="40"><g opacity=".5"><rect x="16" y="4.00" width="5" height="1.6" fill="#9d5cff"/><rect x="22" y="4.00" width="10" height="1.6" fill="#ffe62e"/><rect x="33" y="4.00" width="1" height="1.6" fill="#e8e8e8"/><rect x="35" y="4.00" width="3" height="1.6" fill="#8fee4a"/><rect x="39" y="4.00" width="3" height="1.6" fill="#8fee4a"/><rect x="43" y="4.00" width="2" height="1.6" fill="#8fee4a"/><rect x="46" y="4.00" width="4" height="1.6" fill="#8fee4a"/><rect x="51" y="4.00" width="6" height="1.6" fill="#8fee4a"/><rect x="57" y="4.00" width="1" height="1.6" fill="#e8e8e8"/><rect x="16" y="6.08" width="5" height="1.6" fill="#9d5cff"/><rect x="22" y="6.08" width="7" height="1.6" fill="#ffe62e"/><rect x="30" y="6.08" width="1" height="1.6" fill="#e8e8e8"/><rect x="32" y="6.08" width="3" height="1.6" fill="#ff8c1a"/><rect x="35" y="6.08" width="1" height="1.6" fill="#e8e8e8"/><rect x="16" y="10.24" width="3" height="1.6" fill="#9d5cff"/><rect x="20" y="10.24" width="8" height="1.6" fill="#ff3b4a"/><rect x="29" y="10.24" width="1" height="1.6" fill="#e8e8e8"/><rect x="31" y="10.24" width="1" height="1.6" fill="#ffd700"/><rect x="32" y="10.24" width="5" height="1.6" fill="#8fee4a"/><rect x="38" y="10.24" width="5" height="1.6" fill="#8fee4a"/><rect x="43" y="10.24" width="1" height="1.6" fill="#e8e8e8"/><rect x="45" y="10.24" width="7" height="1.6" fill="#8fee4a"/><rect x="53" y="10.24" width="6" height="1.6" fill="#8fee4a"/><rect x="60" y="10.24" width="13" height="1.6" fill="#8fee4a"/><rect x="73" y="10.24" width="1" height="1.6" fill="#ffd700"/><rect x="74" y="10.24" width="1" height="1.6" fill="#e8e8e8"/><rect x="16" y="14.40" width="8" height="1.6" fill="#9d5cff"/><rect x="25" y="14.40" width="15" height="1.6" fill="#4dd6ea"/><rect x="40" y="14.40" width="1" height="1.6" fill="#ffd700"/><rect x="41" y="14.40" width="8" height="1.6" fill="#38c8da"/><rect x="49" y="14.40" width="1" height="1.6" fill="#ffd700"/><rect x="51" y="14.40" width="1" height="1.6" fill="#ffd700"/><rect x="18" y="16.48" width="7" height="1.6" fill="#ffe62e"/><rect x="25" y="16.48" width="1" height="1.6" fill="#e8e8e8"/><rect x="26" y="16.48" width="3" height="1.6" fill="#3cc4f0"/><rect x="29" y="16.48" width="1" height="1.6" fill="#e070d8"/><rect x="30" y="16.48" width="1" height="1.6" fill="#8fee4a"/><rect x="31" y="16.48" width="2" height="1.6" fill="#ffb12e"/><rect x="34" y="16.48" width="8" height="1.6" fill="#8fee4a"/><rect x="43" y="16.48" width="2" height="1.6" fill="#8fee4a"/><rect x="46" y="16.48" width="2" height="1.6" fill="#1a9cff"/><rect x="48" y="16.48" width="10" height="1.6" fill="#ffe62e"/><rect x="58" y="16.48" width="1" height="1.6" fill="#1a9cff"/><rect x="59" y="16.48" width="2" height="1.6" fill="#8fee4a"/><rect x="61" y="16.48" width="1" height="1.6" fill="#e070d8"/><rect x="62" y="16.48" width="1" height="1.6" fill="#e8e8e8"/><rect x="18" y="18.56" width="8" height="1.6" fill="#38c8da"/><rect x="26" y="18.56" width="1" height="1.6" fill="#e8e8e8"/><rect x="27" y="18.56" width="7" height="1.6" fill="#3cc4f0"/><rect x="34" y="18.56" width="1" height="1.6" fill="#e070d8"/><rect x="35" y="18.56" width="1" height="1.6" fill="#1a9cff"/><rect x="36" y="18.56" width="7" height="1.6" fill="#38c8da"/><rect x="43" y="18.56" width="1" height="1.6" fill="#e8e8e8"/><rect x="45" y="18.56" width="1" height="1.6" fill="#38c8da"/><rect x="46" y="18.56" width="1" height="1.6" fill="#1a9cff"/><rect x="48" y="18.56" width="2" height="1.6" fill="#9d5cff"/><rect x="51" y="18.56" width="7" height="1.6" fill="#ffe62e"/><rect x="58" y="18.56" width="1" height="1.6" fill="#e8e8e8"/><rect x="59" y="18.56" width="3" height="1.6" fill="#3cc4f0"/><rect x="62" y="18.56" width="1" height="1.6" fill="#1a9cff"/><rect x="63" y="18.56" width="1" height="1.6" fill="#8fee4a"/><rect x="64" y="18.56" width="2" height="1.6" fill="#ffd700"/><rect x="66" y="18.56" width="1" height="1.6" fill="#38c8da"/><rect x="68" y="18.56" width="1" height="1.6" fill="#e8e8e8"/><rect x="70" y="18.56" width="1" height="1.6" fill="#ff8c1a"/><rect x="71" y="18.56" width="1" height="1.6" fill="#ffd700"/><rect x="72" y="18.56" width="1" height="1.6" fill="#8fee4a"/><rect x="74" y="18.56" width="2" height="1.6" fill="#ffd700"/><rect x="76" y="18.56" width="7" height="1.6" fill="#38c8da"/><rect x="83" y="18.56" width="1" height="1.6" fill="#ffd700"/><rect x="84" y="18.56" width="1" height="1.6" fill="#8fee4a"/><rect x="85" y="18.56" width="1" height="1.6" fill="#1a9cff"/><rect x="86" y="18.56" width="1" height="1.6" fill="#e070d8"/><rect x="87" y="18.56" width="1" height="1.6" fill="#e8e8e8"/><rect x="16" y="20.64" width="1" height="1.6" fill="#ffd700"/><rect x="16" y="24.80" width="7" height="1.6" fill="#ffe62e"/><rect x="23" y="24.80" width="1" height="1.6" fill="#e8e8e8"/><rect x="24" y="24.80" width="3" height="1.6" fill="#3cc4f0"/><rect x="27" y="24.80" width="1" height="1.6" fill="#ffd700"/><rect x="28" y="24.80" width="1" height="1.6" fill="#8fee4a"/><rect x="29" y="24.80" width="2" height="1.6" fill="#e070d8"/><rect x="31" y="24.80" width="10" height="1.6" fill="#ffe62e"/><rect x="41" y="24.80" width="1" height="1.6" fill="#e070d8"/><rect x="43" y="24.80" width="1" height="1.6" fill="#8fee4a"/><rect x="44" y="24.80" width="2" height="1.6" fill="#e070d8"/><rect x="46" y="24.80" width="7" height="1.6" fill="#ffe62e"/><rect x="53" y="24.80" width="1" height="1.6" fill="#e070d8"/><rect x="54" y="24.80" width="1" height="1.6" fill="#8fee4a"/><rect x="55" y="24.80" width="1" height="1.6" fill="#ffd700"/><rect x="56" y="24.80" width="1" height="1.6" fill="#e8e8e8"/><rect x="16" y="26.88" width="15" height="1.6" fill="#4dd6ea"/><rect x="31" y="26.88" width="1" height="1.6" fill="#ffd700"/><rect x="32" y="26.88" width="8" height="1.6" fill="#ff3b4a"/><rect x="40" y="26.88" width="1" height="1.6" fill="#ffd700"/><rect x="41" y="26.88" width="1" height="1.6" fill="#e8e8e8"/></g>
<rect x="9.6" y="4.00" width="2.4" height="4.16" fill="#1a9ad0"/>
<rect x="9.6" y="10.24" width="2.4" height="2.08" fill="#1a9ad0"/>
<rect x="9.6" y="14.40" width="2.4" height="8.32" fill="#1a9ad0"/>
<rect x="9.6" y="24.80" width="2.4" height="4.16" fill="#1a9ad0"/>
<rect x="9.6" y="21.92" width="2.4" height="2" fill="#d0202c"/>
</svg>
<div class="abs" style="left:1874.4px;top:144px;width:6.2px;height:41.2px;background:#0f566e"></div>
<div class="abs" style="left:1874.4px;top:209.8px;width:6.2px;height:18.0px;background:#0f566e"></div>
<div class="abs" style="left:1874.4px;top:249.2px;width:6.2px;height:63.0px;background:#0f566e"></div>
<div class="abs" style="left:1874.4px;top:312.2px;width:6.2px;height:22.0px;background:#6b2f40"></div>
<div class="abs" style="left:1874.4px;top:355px;width:6.2px;height:42.8px;background:#0f566e"></div>
<div class="abs" style="left:1874px;top:206.6px;width:20px;height:3.2px;background:#c4c4c4"></div>
</div>
<!-- ===== STATUS BAR ===== -->
<div id="status">
<div class="abs" style="left:0;top:961px;width:53px;height:32px;background:#02b416"></div>
<svg style="left:18.5px;top:966.5px" width="16" height="20" fill="none" stroke="#fff" stroke-width="1.8" stroke-linecap="round" stroke-linejoin="round"><path d="M1.1 6.9 L8.5 12.5 L1.1 18.5 M14.7 1.2 L7.7 6.8 L14.7 12.3"/></svg>
<svg style="left:63px;top:966.5px" width="20" height="22" fill="none" stroke="#fff" stroke-width="1.6" stroke-linecap="round"><circle cx="5.4" cy="3.4" r="2.7"/><circle cx="5.4" cy="18.4" r="2.7"/><circle cx="14.6" cy="7" r="2.7"/><path d="M5.4 6.1 V15.7 M14.6 9.7 Q14.4 12.6 10 12.8 Q5.8 13 5.4 15.6"/></svg>
<div class="t" style="left:89.16px;top:968.06px;font-size:18.6px;letter-spacing:0.393px;color:#fff;">main*</div>
<svg style="left:148px;top:967px" width="22" height="20" fill="none" stroke="#fff" stroke-width="1.7" stroke-linecap="round" stroke-linejoin="round"><path d="M3 9 A7.6 7.6 0 0 1 17.4 6.4 M18 12 A7.6 7.6 0 0 1 3.6 14.6"/><path d="M19.6 3.4 L17.8 7.4 L13.8 6.2 M1.4 17.6 L3.2 13.6 L7.2 14.8"/></svg>
<div class="t" style="left:174.17px;top:968.06px;font-size:18.6px;letter-spacing:0.185px;color:#fff;">0↓ 3↑</div>
<svg style="left:240px;top:967px" width="21" height="21" fill="none" stroke="#fff" stroke-width="1.6" stroke-linecap="round"><circle cx="10.2" cy="10.2" r="8.8"/><path d="M6.6 6.6 L13.8 13.8 M13.8 6.6 L6.6 13.8"/></svg>
<div class="t" style="left:266.47px;top:968.06px;font-size:18.6px;color:#fff;">0</div>
<svg style="left:282.5px;top:967px" width="21" height="20" fill="none" stroke="#fff" stroke-width="1.6" stroke-linejoin="round" stroke-linecap="round"><path d="M10.2 1.6 L19.4 18.4 H1 Z"/><path d="M10.2 7.6 V12.6 M10.2 15.2 V15.6" stroke-width="1.8"/></svg>
<div class="t" style="left:308.47px;top:968.06px;font-size:18.6px;color:#fff;">0</div>
<svg style="left:345.5px;top:966.5px" width="21" height="21" fill="none" stroke="#fff" stroke-width="1.5" stroke-linecap="round" stroke-linejoin="round"><circle cx="10.2" cy="7.4" r="1.7"/><path d="M10.2 9.4 L5.6 20 M10.2 9.4 L14.8 20 M7.4 15.6 H13"/><path d="M6.2 11.4 A5.6 5.6 0 0 1 6.2 3.4 M14.2 3.4 A5.6 5.6 0 0 1 14.2 11.4 M3.4 14 A9.4 9.4 0 0 1 3.4 0.8 M17 0.8 A9.4 9.4 0 0 1 17 14"/></svg>
<div class="t" style="left:370.87px;top:968.06px;font-size:18.6px;color:#fff;">0</div>
<div class="t" style="left:1240.57px;top:968.06px;font-size:18.6px;letter-spacing:-0.186px;color:#fff;">Ln 4, Col 60</div>
<div class="t" style="left:1362.26px;top:968.06px;font-size:18.6px;letter-spacing:-0.642px;color:#fff;">Spaces: 2</div>
<div class="t" style="left:1463.17px;top:968.06px;font-size:18.6px;letter-spacing:-0.263px;color:#fff;">UTF-8</div>
<div class="t" style="left:1538.06px;top:968.06px;font-size:18.6px;letter-spacing:-2.194px;color:#fff;">CRLF</div>
<div class="t" style="left:1602.79px;top:967.56px;font-size:18.6px;letter-spacing:6.521px;color:#fff;">{}</div>
<div class="t" style="left:1632.11px;top:968.06px;font-size:18.6px;letter-spacing:-0.523px;color:#fff;">JavaScript</div>
<svg style="left:1738px;top:967.5px" width="19" height="20" fill="none" stroke="#fff" stroke-width="1.6" stroke-linecap="round"><circle cx="9.4" cy="8.6" r="2.2" fill="#fff"/><path d="M9.4 10 V18.6" stroke-width="2.6"/><path d="M5.2 12.8 A5.8 5.8 0 1 1 13.6 12.8 M3 15.6 A9 9 0 1 1 15.8 15.6" stroke-width="1.5"/></svg>
<div class="t" style="left:1762.66px;top:968.06px;font-size:18.6px;letter-spacing:-0.323px;color:#fff;">Go Live</div>
<svg style="left:1851px;top:968px" width="19" height="20" fill="none" stroke="#fff" stroke-width="1.6" stroke-linejoin="round" stroke-linecap="round"><path d="M2 14.4 C4.2 12 3.6 9 3.8 6.8 C4.2 3.4 6.4 1.4 9.2 1.4 C12 1.4 14.2 3.4 14.6 6.8 C14.8 9 14.2 12 16.4 14.4 Z"/><path d="M7.2 16.6 Q9.2 19 11.2 16.6"/></svg>
</div>
<!-- ===== frame lines ===== -->
<div class="hl" style="left:0;top:54px;width:1894px"></div>
<div class="hl" style="left:0;top:55px;width:1894px;background:#065a0c"></div>
<div class="hl" style="left:865px;top:55px;width:189px;background:#0a9014"></div>
<div class="vl" style="left:74px;top:55px;height:906px;background:#0a9a14"></div>
<div class="vl" style="left:74px;top:56px;height:74px;background:#1f5c24"></div>
<div class="vl" style="left:452px;top:55px;height:906px"></div>
<div class="hl" style="left:453px;top:108px;width:1441px"></div>
<div class="hl" style="left:453px;top:109px;width:1441px;background:#05500a"></div>
<div class="hl" style="left:453px;top:142px;width:1441px;background:#04440a"></div>
<div class="hl" style="left:453px;top:143px;width:1441px"></div>
<div class="hl" style="left:0;top:959px;width:1894px;background:#04440a"></div>
<div class="hl" style="left:0;top:960px;width:1894px;background:#0a9a14"></div>
<div class="hl" style="left:53px;top:961px;width:1841px;background:#065a0c"></div>

</body>
</html>
